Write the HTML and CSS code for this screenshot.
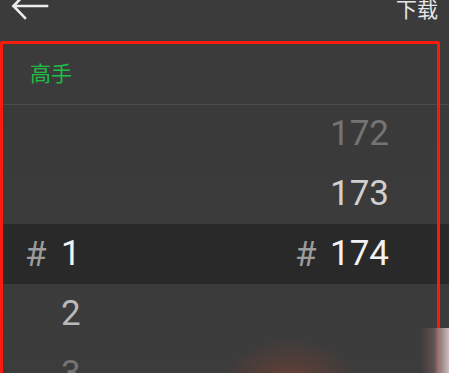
FILE: index.html
```html
<!DOCTYPE html>
<html lang="zh">
<head>
<meta charset="utf-8">
<link rel="stylesheet" href="styles.css">
</head>
<body>
<div class="screen">
  <div class="topbar">
    <svg class="back" width="40" height="30" viewBox="0 0 40 30">
      <path d="M4.5 15 H38 M16 3 L4.5 15 L16 27" fill="none" stroke="#ececec" stroke-width="2.6" stroke-linecap="square" stroke-linejoin="miter"/>
    </svg>
    <span class="download">下载</span>
  </div>
  <div class="header"><span class="level">高手</span></div>
  <div class="wheel">
    <div class="rows">
      <div class="row"><span class="left"></span><span class="right dim1"><span class="num">172</span></span></div>
      <div class="row"><span class="left"></span><span class="right dim2"><span class="num">173</span></span></div>
      <div class="row active"><span class="left"><span class="hash">#</span><span class="num">1</span></span><span class="right"><span class="hash">#</span><span class="num">174</span></span></div>
      <div class="row"><span class="left dim3"><span class="hash blank">#</span><span class="num">2</span></span><span class="right"></span></div>
      <div class="row"><span class="left dim1"><span class="hash blank">#</span><span class="num">3</span></span><span class="right"></span></div>
    </div>
  </div>
  <div class="annot"></div>
  <div class="wm-glow"></div>
  <div class="wm-edge"></div>
</div>
</body>
</html>
```
FILE: styles.css
```css
html, body {
  margin: 0;
  padding: 0;
  background: #3b3b3b;
}
.screen {
  position: relative;
  width: 449px;
  height: 373px;
  overflow: hidden;
  background: #3b3b3b;
  font-family: Roboto, "Noto Sans CJK SC", sans-serif;
}
.topbar {
  height: 41px;
  display: flex;
  justify-content: space-between;
  align-items: flex-start;
}
.back {
  display: block;
  margin-left: 9px;
  margin-top: -9px;
}
.download {
  font-family: "Noto Sans CJK SC", sans-serif;
  font-size: 21px;
  line-height: 16px;
  color: #e6e6e6;
  margin-right: 11px;
}
.header {
  height: 63px;
  border-bottom: 1px solid #4c4c4c;
  display: flex;
  align-items: center;
  padding-left: 30px;
}
.level {
  font-family: "Noto Sans CJK SC", sans-serif;
  font-size: 21px;
  color: #1fbe47;
  line-height: 20px;
  margin-top: -2px;
}
.wheel {
  height: 268px;
  overflow: hidden;
  background: linear-gradient(#3a3a3a, #3c3c3c);
}
.rows {
  margin-top: -1px;
}
.row {
  height: 60px;
  display: flex;
  align-items: center;
  font-size: 35px;
  color: #f2f2f2;
}
.row.active {
  background: #292929;
}
.left {
  display: flex;
  align-items: center;
  padding-left: 25px;
}
.right {
  display: flex;
  align-items: center;
  margin-left: auto;
  padding-right: 60px;
}
.hash {
  color: #9c9c9c;
  width: 36px;
}
.right .hash {
  width: 35px;
}
.hash.blank {
  visibility: hidden;
}
.num {
  line-height: 40px;
}
.dim1 { color: #747474; }
.dim2 { color: #cfcfcf; }
.dim3 { color: #b9b9b9; }
.annot {
  position: absolute;
  left: 0;
  top: 41px;
  width: 434px;
  height: 340px;
  border: 3px solid #f81c0e;
  border-radius: 2px;
  pointer-events: none;
}
.wm-glow {
  position: absolute;
  left: 215px;
  top: 335px;
  width: 150px;
  height: 80px;
  background: radial-gradient(ellipse at 50% 75%, rgba(160, 72, 45, 0.75) 0%, rgba(130, 66, 48, 0.35) 35%, rgba(60, 60, 60, 0) 68%);
}
.wm-edge {
  position: absolute;
  left: 420px;
  top: 328px;
  width: 29px;
  height: 45px;
  background: linear-gradient(90deg, rgba(59, 59, 59, 0) 0%, rgba(110, 85, 85, 0.7) 45%, rgba(205, 188, 186, 1) 100%);
}
```
